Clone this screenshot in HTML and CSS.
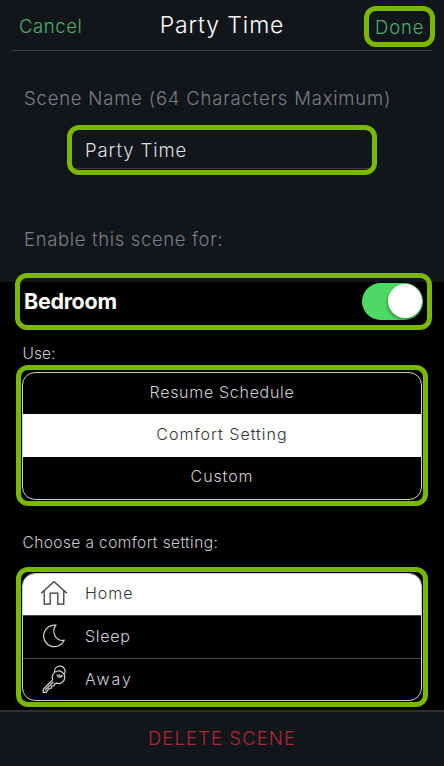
FILE: index.html
```html
<!DOCTYPE html>
<html lang="en">
<head>
<meta charset="utf-8">
<title>Party Time</title>
<link rel="stylesheet" href="styles.css">
</head>
<body>
<div class="screen">
  <section class="top">
    <header class="bar">
      <span class="link cancel">Cancel</span>
      <h1 class="title">Party Time</h1>
      <span class="mark link done">Done</span>
    </header>
    <p class="label name-label">Scene Name (64 Characters Maximum)</p>
    <div class="mark name-field"><span class="name-value">Party Time</span></div>
    <p class="label enable-label">Enable this scene for:</p>
  </section>
  <main class="main">
    <div class="mark room">
      <span class="room-name">Bedroom</span>
      <span class="toggle"><span class="knob"></span></span>
    </div>
    <p class="caption use">Use:</p>
    <div class="mark group">
      <ul class="list modes">
        <li class="row"><span class="resume">Resume Schedule</span></li>
        <li class="row active"><span class="comfort">Comfort Setting</span></li>
        <li class="row"><span class="custom">Custom</span></li>
      </ul>
    </div>
    <p class="caption choose">Choose a comfort setting:</p>
    <div class="mark group settings-group">
      <ul class="list settings">
        <li class="row active">
          <svg class="icon" viewBox="0 0 30 30"><path d="M2.200 14.300 15 2.600l12.800 11.700M5.200 12v13.200h6V14.100h7.600v11.100h6V12"/></svg>
          <span class="home">Home</span>
        </li>
        <li class="row">
          <svg class="icon" viewBox="0 0 30 30"><path d="M16.800 4.200A10.800 10.800 0 1 0 25.200 19.300C17 20.600 11.800 11.500 16.800 4.200Z"/></svg>
          <span class="sleep">Sleep</span>
        </li>
        <li class="row">
          <svg class="icon" viewBox="0 0 30 30"><path d="M15.400 8.100A5.400 5.400 0 1 1 25.200 10.500M13.700 15.700A6.300 6.300 0 1 1 17.500 19.200L15.900 19.500 15.200 21.700 12.900 22 12.300 24.100 10 24.500 7 28.300H4.200V25.200ZM6.200 26 14.400 17.700M18.200 10.500C17.800 13.700 22.800 14 23.300 10.900M19.500 10.500l2.600 2"/></svg>
          <span class="away">Away</span>
        </li>
      </ul>
    </div>
  </main>
  <footer class="footer"><span class="delete">DELETE SCENE</span></footer>
</div>
</body>
</html>
```
FILE: styles.css
```css
* { box-sizing: border-box; }
body {
  margin: 0;
  background: #000;
  font-family: Inter, "Liberation Sans", sans-serif;
  font-weight: 300;
}
h1, p, ul { margin: 0; padding: 0; font-weight: inherit; }
ul { list-style: none; }
span, p, h1 { white-space: nowrap; }

.screen {
  width: 444px;
  height: 766px;
  display: flex;
  flex-direction: column;
  overflow: hidden;
}
.mark { border: 5px solid #7ab800; border-radius: 12px; }

.top { flex: none; height: 282px; background: #11161a; }
.bar {
  display: grid;
  grid-template-columns: 1fr auto 1fr;
  height: 51px;
  margin: 0 12px;
  border-bottom: 1px solid #393d40;
}
.link { font-size: 18.5px; color: #4fae6c; }
.cancel { padding: 14px 0 0 7px; line-height: 25px; letter-spacing: 0.6px; }
.title { padding-top: 10px; font-size: 23px; line-height: 30px; color: #fff; letter-spacing: 0.9px; }
.done {
  justify-self: end;
  width: 71px;
  height: 41px;
  margin: 6px -3px 0 0;
  padding-left: 6px;
  line-height: 32px;
  letter-spacing: 0.9px;
}

.label { padding-left: 24px; font-size: 18.5px; line-height: 24px; color: #7b7e83; }
.name-label { margin-top: 35px; letter-spacing: 0.8px; }
.name-field {
  width: 310px;
  height: 50px;
  margin: 15px 0 0 67px;
  padding: 0 3px 1px 3px;
}
.name-value {
  display: block;
  height: 39px;
  padding-left: 10px;
  border-bottom: 1px solid #3d3b42;
  font-size: 18.5px;
  line-height: 40px;
  color: #dedfe1;
  letter-spacing: 0.9px;
}
.enable-label { margin-top: 52px; letter-spacing: 0.65px; }

.main { flex: 1; min-height: 0; }
.room {
  position: relative;
  display: flex;
  justify-content: space-between;
  width: 417px;
  height: 57px;
  margin: -9px 0 0 15px;
  padding: 5px 4px 0 4px;
}
.room-name { font-size: 21.5px; line-height: 36px; font-weight: 700; color: #fff; letter-spacing: -0.3px; }
.toggle {
  display: flex;
  justify-content: flex-end;
  width: 61px;
  height: 37px;
  padding: 1px;
  border-radius: 19px;
  background: #4cd964;
}
.knob { width: 34px; height: 34px; border-radius: 50%; background: #fff; box-shadow: -1px 2px 3px rgba(0, 0, 0, 0.3); }

.caption { padding-left: 22.500px; line-height: 22px; color: #c9c9c9; }
.use { margin-top: 13px; font-size: 15.5px; }
.choose { margin-top: 26px; font-size: 15.5px; letter-spacing: 0.4px; }
.group { width: 412px; height: 141px; margin: 0 0 0 16px; padding: 2px 1px 0 1px; }
.settings-group { height: 140px; margin-top: 13px; padding-top: 1px; }
.list {
  height: 128px;
  border: 1px solid #d0d0d0;
  border-radius: 13px;
  overflow: hidden;
  font-size: 16px;
  color: #d0d0d0;
}
.row { display: flex; align-items: center; }
.active { background: #fff; color: #333; }
.modes .row { justify-content: center; height: 41px; padding-bottom: 4px; }
.modes .row.active { height: 43px; }
.modes .row:last-child { padding-bottom: 3px; }
.settings .row { height: 42px; border-bottom: 1px solid #484848; }
.settings .row:nth-child(2) { height: 43px; }
.settings .row:last-child { border-bottom: 0; }
.settings span { padding-bottom: 3px; letter-spacing: 1px; }
.icon {
  width: 30px;
  height: 30px;
  margin: -2px 16px 0 16px;
  fill: none;
  stroke: currentColor;
  stroke-width: 1.25;
}
.resume { letter-spacing: 0.7px; }
.comfort { letter-spacing: 1px; }
.custom { letter-spacing: 0.9px; }
.settings .sleep { letter-spacing: 0.7px; }
.settings .away { letter-spacing: 1.9px; }

.footer {
  flex: none;
  display: flex;
  justify-content: center;
  height: 56px;
  border-top: 2px solid #2c3033;
  background: #11161a;
}
.delete { font-size: 18.5px; line-height: 53px; color: #b32637; letter-spacing: 1.1px; }
```
